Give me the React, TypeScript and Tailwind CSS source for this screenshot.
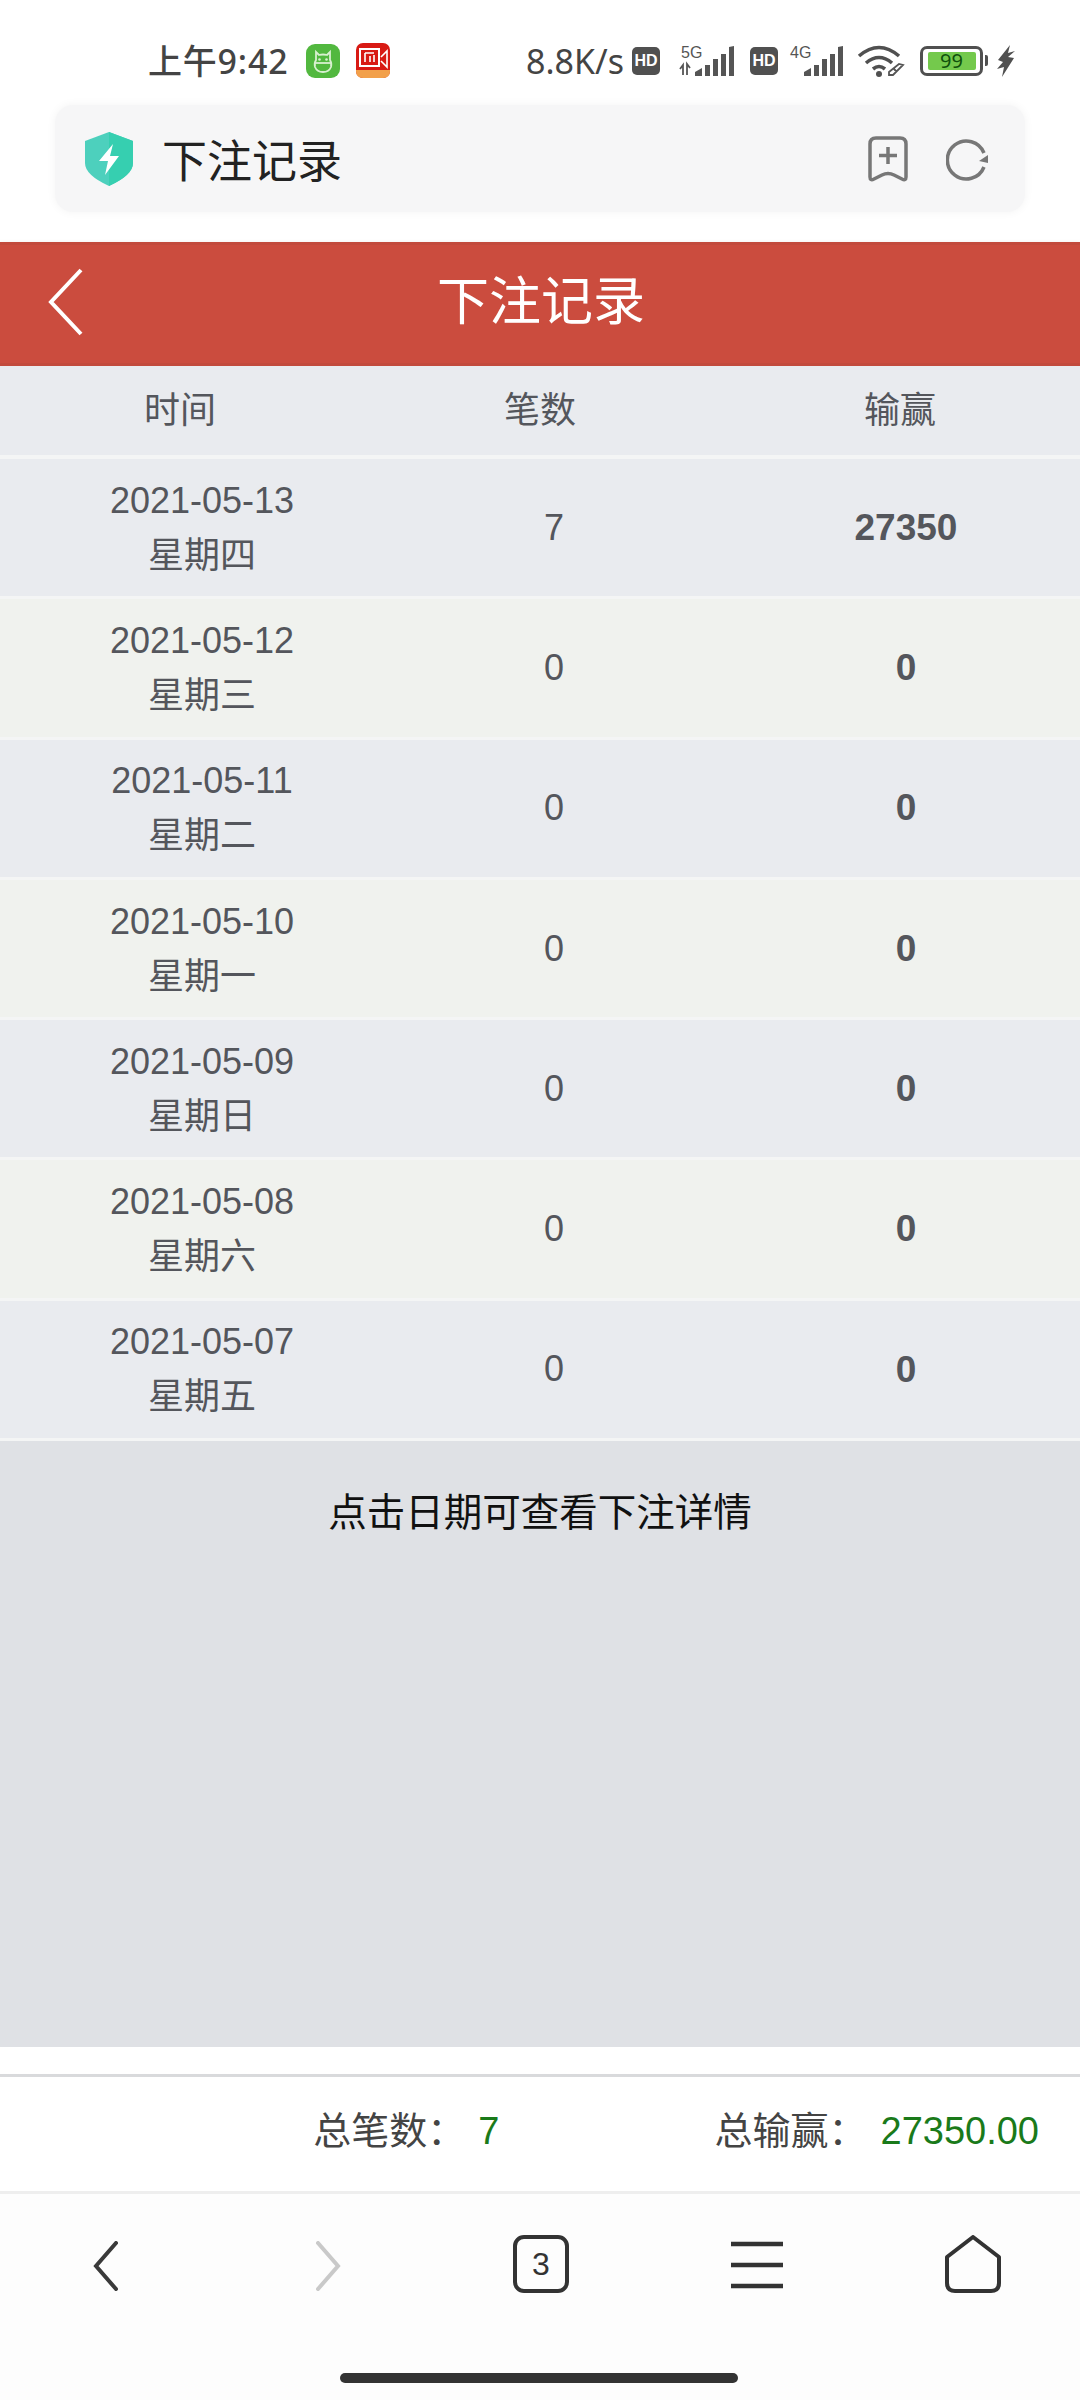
import React from 'react';

const rows = [
    { date: '2021-05-13', week: '星期四', count: '7', win: '27350' },
    { date: '2021-05-12', week: '星期三', count: '0', win: '0' },
    { date: '2021-05-11', week: '星期二', count: '0', win: '0' },
    { date: '2021-05-10', week: '星期一', count: '0', win: '0' },
    { date: '2021-05-09', week: '星期日', count: '0', win: '0' },
    { date: '2021-05-08', week: '星期六', count: '0', win: '0' },
    { date: '2021-05-07', week: '星期五', count: '0', win: '0' },
];

const Signal: React.FC<{ label: string; arrows?: boolean }> = ({ label, arrows }) => (
    <svg width="57" height="32" viewBox="0 0 57 32" className="block overflow-visible">
        <text x="4" y="13" fontSize="16" fill="#555" fontFamily="Liberation Sans, sans-serif">{label}</text>
        {arrows && <path d="M3 24l3-4v10M10 30v-11l3 4" stroke="#555" strokeWidth="1.8" fill="none" />}
        <path d="M18 31v-4l7-4v8zM28 31V20h5v11zM36 31V14h5v17zM44 31V9h5v22zM52 31V2l5-1v30z" fill="#555" />
    </svg>
);

const Hd: React.FC = () => (
    <div className="flex h-[28px] w-[28px] items-center justify-center rounded-[5px] bg-[#505050] text-[16px] font-bold text-white">HD</div>
);

const App: React.FC = () => {
    return (
        <div className="flex h-[2400px] w-[1080px] flex-col overflow-hidden bg-white font-['Liberation_Sans','Noto_Sans_CJK_SC',sans-serif] text-[#54565c]">
            {/* status bar */}
            <div className="flex h-[105px] items-center pl-[148px] pt-[16px] text-[#444]">
                <span className="w-[158px] whitespace-nowrap font-['Noto_Sans','Noto_Sans_CJK_SC',sans-serif] text-[34px] font-medium leading-none tracking-[0.8px]">上午9:42</span>
                <svg width="34" height="34" viewBox="0 0 34 34" className="block">
                    <rect width="34" height="34" rx="9" fill="#52b83f" />
                    <path d="M10 8l3 3q4-1 8 0l3-3v8q2 3 1 7-2 5-8 5t-8-5q-1-4 1-7z" fill="none" stroke="#d8f0d0" strokeWidth="1.8" />
                    <path d="M8.500 19h17" stroke="#d8f0d0" strokeWidth="1.8" />
                    <circle cx="13.500" cy="15.500" r="1.300" fill="#d8f0d0" />
                    <circle cx="20.500" cy="15.500" r="1.300" fill="#d8f0d0" />
                </svg>
                <svg width="34" height="35" viewBox="0 0 34 35" className="ml-[16px] block">
                    <rect width="34" height="35" rx="7" fill="#d81a14" />
                    <path d="M0 27h34v1q0 7-7 7H7q-7 0-7-7z" fill="#f2a04a" />
                    <rect x="4" y="6" width="19" height="17" fill="none" stroke="#fff" strokeWidth="2" />
                    <path d="M9 10h9M9 10v9M14 13v6M18 12v7M25 14l6-6v16l-6-6" fill="none" stroke="#fff" strokeWidth="1.6" />
                </svg>
                <span className="ml-[136px] w-[106px] font-['Noto_Sans',sans-serif] text-[34px] leading-none">8.8K/s</span>
                <Hd />
                <div className="ml-[17px]"><Signal label="5G" arrows /></div>
                <div className="ml-[16px]"><Hd /></div>
                <div className="ml-[8px]"><Signal label="4G" /></div>
                <svg width="48" height="32" viewBox="0 0 48 32" className="ml-[14px] block">
                    <path d="M2 11q20-17 40 0M9 18q13-11 26 0M16 24q6-5 12 0" fill="none" stroke="#505050" strokeWidth="3.6" />
                    <circle cx="22" cy="29" r="3" fill="#505050" />
                    <path d="M32 30l4 0 10-10-4-1-10 8zM37 24l3 3" stroke="#555" strokeWidth="1.8" fill="none" />
                </svg>
                <div className="ml-[15px] flex h-[30px] w-[63px] items-center justify-center rounded-[7px] border-[3px] border-[#505050] bg-white">
                    <div className="flex h-[18px] w-[48px] items-center justify-center rounded-[2px] bg-[#74c94c] font-['Noto_Sans',sans-serif] text-[20px] leading-none text-[#10500c]">99</div>
                </div>
                <div className="ml-[2px] h-[11px] w-[3px] rounded-r-[2px] bg-[#505050]" />
                <svg width="18" height="32" viewBox="0 0 18 32" className="ml-[9px] block">
                    <path d="M13 0L1 15l5 2-6 7 7-2-2 10L17 13l-6-1 7-6-7 2z" fill="#505050" />
                </svg>
            </div>

            {/* address bar */}
            <div className="mx-[55px] flex h-[107px] items-center rounded-[18px] bg-[#f6f6f7] pl-[30px] pr-[35px] shadow-[0_0_10px_rgba(0,0,0,0.05)]">
                <svg width="48" height="54" viewBox="0 0 48 54" className="block">
                    <path d="M24 0l24 9v22q0 12-24 23Q0 43 0 31V9z" fill="#4dd0bd" />
                    <path d="M24 0l24 9v22q0 12-24 23z" fill="#36cfb0" />
                    <path d="M28 12L14 29h9l-3 14 14-19h-9z" fill="#fff" />
                </svg>
                <span className="ml-[29px] flex-1 font-['Noto_Sans_CJK_SC',sans-serif] text-[45px] leading-none text-[#222]">下注记录</span>
                <svg width="40" height="46" viewBox="0 0 40 46" className="ml-[1px] block">
                    <path d="M2 8q0-6 6-6h24q6 0 6 6v33q0 4-4 2l-8-4q-6-3-12 0l-8 4q-4 2-4-2z" fill="none" stroke="#777" strokeWidth="3.5" />
                    <path d="M20 11v17M11 19.500h18" stroke="#777" strokeWidth="3.5" />
                </svg>
                <svg width="44" height="44" viewBox="0 0 44 44" className="ml-[38px] block">
                    <path d="M38 30A19 19 0 1 1 38 16" fill="none" stroke="#777" strokeWidth="3.5" />
                    <path d="M33 24l9 2 0-8z" fill="#777" />
                </svg>
            </div>

            {/* page header */}
            <div className="mt-[30px] flex h-[124px] items-center border-y-[3px] border-[#c24a3c] bg-[#cb4c3e] pb-[5px] shadow-[0_3px_6px_rgba(0,0,0,0.18)]">
                <svg width="36" height="68" viewBox="0 0 36 68" className="ml-[48px] block">
                    <path d="M33 2L3 34l30 32" fill="none" stroke="#fff" strokeWidth="4" />
                </svg>
                <span className="ml-[353px] text-[52px] leading-none text-white">下注记录</span>
            </div>

            {/* table */}
            <div className="flex min-h-0 flex-1 flex-col bg-[#dfe1e5]">
                <div className="grid h-[93px] shrink-0 grid-cols-3 items-center border-b-[4px] border-[#f4f5f5] bg-[#e9ebef] pt-[1px] text-center text-[36px]">
                    <span>时间</span>
                    <span>笔数</span>
                    <span>输赢</span>
                </div>
                {rows.map((row, i) => (
                    <div
                        key={row.date}
                        className={`grid h-[140.3px] shrink-0 grid-cols-[352px_352px_352px] items-center border-b-[3px] border-[#f4f5f5] pl-[26px] text-center text-[36px] ${i % 2 === 0 ? 'bg-[#e9ebef]' : 'bg-[#f0f2ee]'}`}
                    >
                        <div className="leading-[55px]">
                            <div>{row.date}</div>
                            <div>{row.week}</div>
                        </div>
                        <span>{row.count}</span>
                        <span className="text-[37px] font-bold">{row.win}</span>
                    </div>
                ))}
                <p className="pt-[43px] text-center text-[38.5px] leading-[57px] text-[#111]">点击日期可查看下注详情</p>
            </div>

            {/* totals */}
            <div className="h-[27px] shrink-0 bg-white" />
            <div className="flex h-[120px] shrink-0 items-center justify-end border-y-[3px] border-t-[#d9dadc] border-b-[#eeeeee] pb-[6px] pr-[41px] text-[38px] text-[#444]">
                <span>总笔数：</span>
                <span className="ml-[13px] text-[#1a7a1a]">7</span>
                <span className="ml-[215px]">总输赢：</span>
                <span className="ml-[14px] text-[#1a7a1a]">27350.00</span>
            </div>

            {/* browser nav */}
            <div className="relative h-[206px] shrink-0 bg-[#fdfdfd]">
                <div className="flex items-start pl-[93px] pt-[41px]">
                    <svg width="26" height="50" viewBox="0 0 26 50" className="mt-[6px] block">
                        <path d="M23 2L3 25l20 23" fill="none" stroke="#3a3a3a" strokeWidth="4" strokeLinecap="round" />
                    </svg>
                    <svg width="26" height="50" viewBox="0 0 26 50" className="ml-[196px] mt-[6px] block">
                        <path d="M3 2l20 23L3 48" fill="none" stroke="#c9c9c9" strokeWidth="4" strokeLinecap="round" />
                    </svg>
                    <div className="ml-[172px] flex h-[58px] w-[56px] items-center justify-center rounded-[11px] border-[4px] border-[#333] text-[32px] leading-none text-[#333]">3</div>
                    <svg width="54" height="48" viewBox="0 0 54 48" className="ml-[161px] mt-[6px] block">
                        <path d="M1 3h52M1 24h52M1 45h52" stroke="#333" strokeWidth="4.500" />
                    </svg>
                    <svg width="56" height="58" viewBox="0 0 56 58" className="ml-[161px] block">
                        <path d="M28 2L54 22v26q0 8-8 8H10q-8 0-8-8V22z" fill="none" stroke="#333" strokeWidth="4" strokeLinejoin="round" />
                    </svg>
                </div>
                <div className="absolute bottom-[17px] left-[340px] h-[10px] w-[398px] rounded-full bg-[#333]" />
            </div>
        </div>
    );
};

export default App;
